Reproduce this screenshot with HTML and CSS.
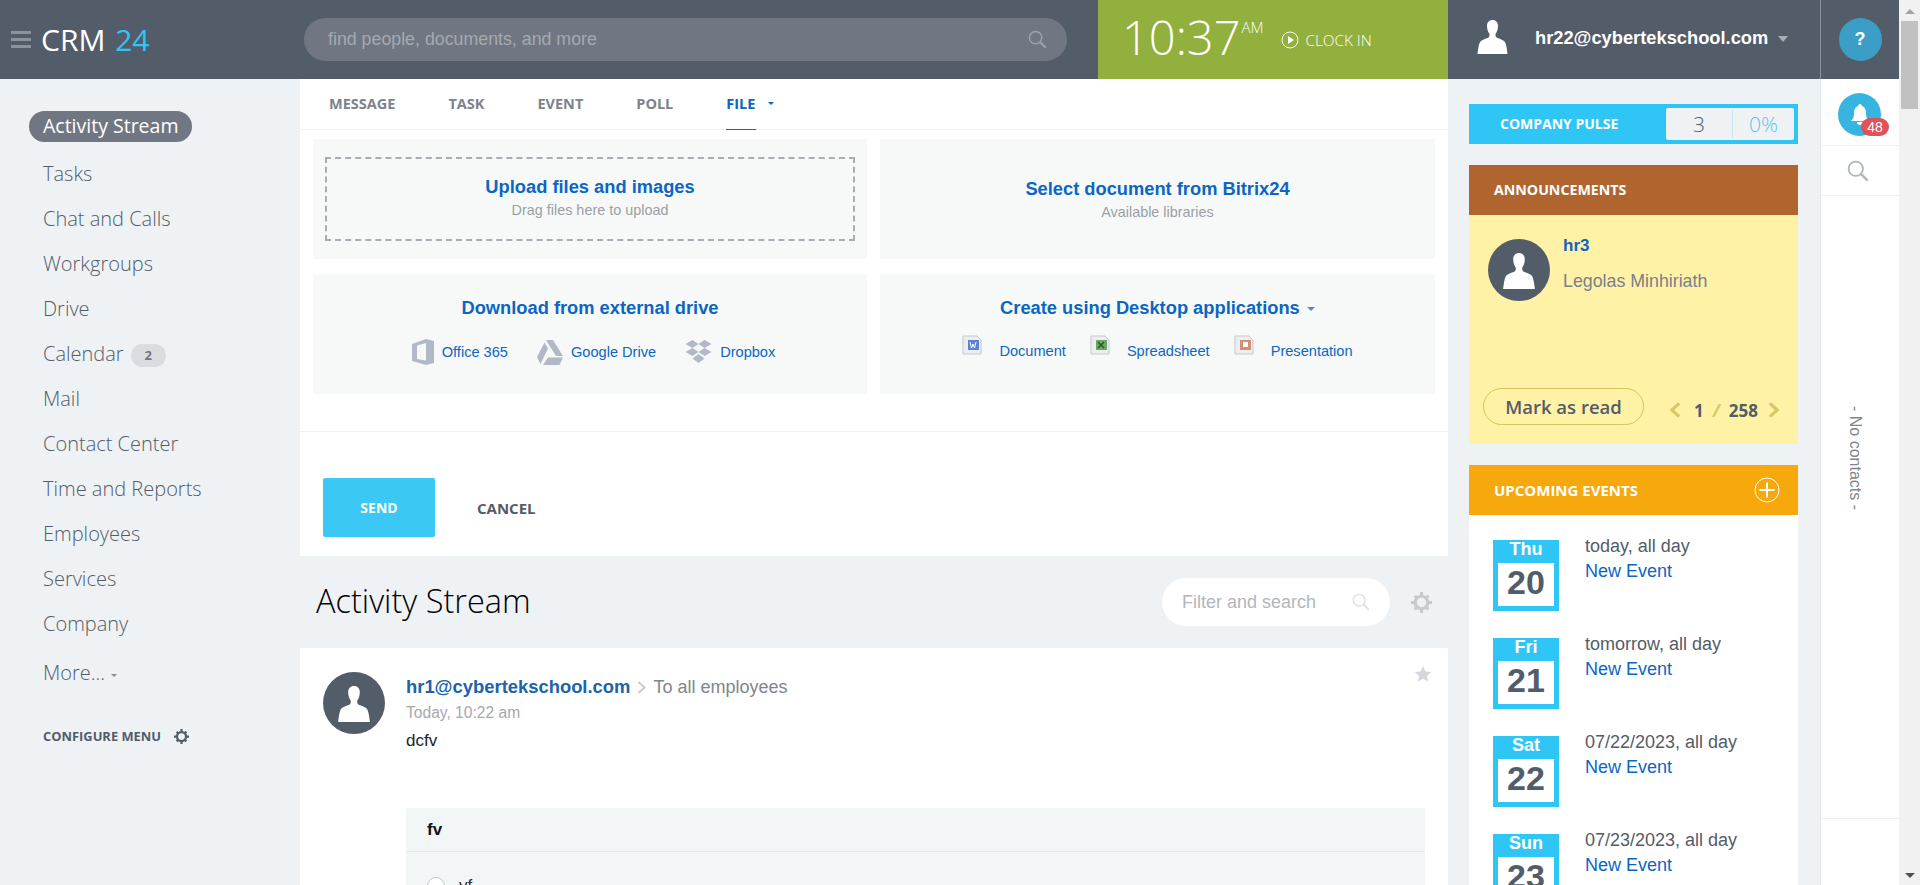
FILE: index.html
```html
<!DOCTYPE html>
<html lang="en">
<head>
    <meta charset="UTF-8">
    <title>CRM 24 - Activity Stream</title>
    <link rel="stylesheet" href="styles.css">
</head>
<body>
    <svg class="defs" width="0" height="0">
        <symbol id="person" viewBox="0 0 30 34">
            <path d="M15 0c-3.500 0-5.500 2.500-5.500 6 0 3 1 6 2.500 8 0 2 0 3-2 4-3 1-6 2-7.500 4C1 25 .5 30 0 34h30c-.5-4-1-9-2.500-12-1.500-2-4.500-3-7.500-4-2-1-2-2-2-4 1.500-2 2.500-5 2.500-8 0-3.500-2-6-5.500-6z"/>
        </symbol>
        <symbol id="magnifier" viewBox="0 0 20 20">
            <circle cx="8" cy="8" r="6.500" fill="none" stroke="currentColor" stroke-width="1.600"/>
            <path d="M12.800 12.800l6 6" stroke="currentColor" stroke-width="2.200" fill="none"/>
        </symbol>
        <symbol id="gear" viewBox="0 0 20 20">
            <circle cx="10" cy="10" r="6" fill="none" stroke="currentColor" stroke-width="3"/>
            <path d="M8.500 0h3v3h-3zM8.500 17h3v3h-3zM0 8.500h3v3H0zM17 8.500h3v3h-3zM2.500 4.600l2.100-2.100 2 2-2.100 2.100zM13.400 15.500l2.100-2.100 2 2-2.100 2.100zM2.500 15.400l2-2 2.100 2.100-2 2zM13.400 4.500l2.100-2.100 2.100 2.100-2.100 2.100z" fill="currentColor"/>
        </symbol>
    </svg>

    <div class="window">
        <div class="page">
            <header class="topbar">
                <div class="brand">
                    <span class="burger"><i></i><i></i><i></i></span>
                    <span class="logo">CRM <b>24</b></span>
                </div>
                <div class="search">
                    <span>find people, documents, and more</span>
                    <svg class="search-icon"><use href="#magnifier"/></svg>
                </div>
                <div class="clock">
                    <span class="time">10:37</span><span class="ampm">AM</span>
                    <svg class="play" viewBox="0 0 18 18"><circle cx="9" cy="9" r="8" fill="none" stroke="#fff" stroke-width="1"/><path d="M7 5l6 4-6 4z" fill="#fff"/></svg>
                    <span class="clock-in">CLOCK IN</span>
                </div>
                <div class="user">
                    <svg class="user-icon"><use href="#person"/></svg>
                    <span class="user-name">hr22@cybertekschool.com</span>
                    <span class="caret"></span>
                </div>
            </header>

            <div class="columns">
                <nav class="sidebar">
                    <a class="nav-item active"><span>Activity Stream</span></a>
                    <a class="nav-item">Tasks</a>
                    <a class="nav-item">Chat and Calls</a>
                    <a class="nav-item">Workgroups</a>
                    <a class="nav-item">Drive</a>
                    <a class="nav-item">Calendar <em class="count">2</em></a>
                    <a class="nav-item">Mail</a>
                    <a class="nav-item">Contact Center</a>
                    <a class="nav-item">Time and Reports</a>
                    <a class="nav-item">Employees</a>
                    <a class="nav-item">Services</a>
                    <a class="nav-item">Company</a>
                    <a class="nav-item more">More... <span class="more-caret"></span></a>
                    <div class="configure">
                        CONFIGURE MENU
                        <svg class="configure-gear"><use href="#gear"/></svg>
                    </div>
                </nav>

                <main class="main">
                    <section class="composer">
                        <div class="tabs">
                            <a class="tab">MESSAGE</a>
                            <a class="tab">TASK</a>
                            <a class="tab">EVENT</a>
                            <a class="tab">POLL</a>
                            <a class="tab active">FILE <span class="tab-caret"></span></a>
                        </div>
                        <div class="file-grid">
                            <div class="file-card">
                                <div class="dropzone">
                                    <a class="card-title">Upload files and images</a>
                                    <span class="card-sub">Drag files here to upload</span>
                                </div>
                            </div>
                            <div class="file-card">
                                <a class="card-title">Select document from Bitrix24</a>
                                <span class="card-sub">Available libraries</span>
                            </div>
                            <div class="file-card">
                                <a class="card-title">Download from external drive</a>
                                <div class="services">
                                    <a class="service">
                                        <svg width="22" height="26" viewBox="0 0 22 26"><path d="M14 0l8 2v22l-8 2-14-4V5zM14 4L5 6.500V20l9 1.500z" fill="#b1b9c7" fill-rule="evenodd"/></svg>
                                        Office 365
                                    </a>
                                    <a class="service">
                                        <svg width="26" height="25" viewBox="0 0 26 25"><path d="M9 0h7l10 16h-7zM7.500 2.500L11 8.500 3.500 24 0 17zM11 17.500h15L22.500 25H6z" fill="#b1b9c7"/></svg>
                                        Google Drive
                                    </a>
                                    <a class="service">
                                        <svg width="27" height="25" viewBox="0 0 27 25"><path d="M7.500 0l6 4-6 4-7-4zM19.500 0l7 4-7 4-6-4zM7.500 8l6 4-6 4-7-4zM19.500 8l7 4-7 4-6-4zM13.500 14l6 4.500-6 4.500-6-4.500z" fill="#b1b9c7"/></svg>
                                        Dropbox
                                    </a>
                                </div>
                            </div>
                            <div class="file-card">
                                <a class="card-title">Create using Desktop applications <span class="title-caret"></span></a>
                                <div class="services desktop">
                                    <a class="service">
                                        <svg width="20" height="20" viewBox="0 0 20 20"><path d="M1 1h14l4 4v14H1z" fill="#eceef2" stroke="#c3c7cd"/><rect x="6" y="5" width="11" height="10" fill="#5b82d6"/><path d="M8 7l1.500 6 1.500-4 1.500 4L14 7" fill="none" stroke="#fff"/></svg>
                                        Document
                                    </a>
                                    <a class="service">
                                        <svg width="20" height="20" viewBox="0 0 20 20"><path d="M1 1h14l4 4v14H1z" fill="#eceef2" stroke="#c3c7cd"/><rect x="6" y="5" width="11" height="10" fill="#6ea763"/><path d="M8 7l6 6M14 7l-6 6" stroke="#1f5e26" stroke-width="1.500"/></svg>
                                        Spreadsheet
                                    </a>
                                    <a class="service">
                                        <svg width="20" height="20" viewBox="0 0 20 20"><path d="M1 1h14l4 4v14H1z" fill="#eceef2" stroke="#c3c7cd"/><rect x="6" y="5" width="11" height="10" fill="#d78f72"/><rect x="9" y="7" width="5" height="5" fill="#fff"/></svg>
                                        Presentation
                                    </a>
                                </div>
                            </div>
                        </div>
                        <div class="composer-actions">
                            <button class="send">SEND</button>
                            <button class="cancel">CANCEL</button>
                        </div>
                    </section>

                    <div class="stream-head">
                        <h1>Activity Stream</h1>
                        <div class="filter">
                            <span>Filter and search</span>
                            <svg class="filter-icon"><use href="#magnifier"/></svg>
                        </div>
                        <svg class="stream-gear"><use href="#gear"/></svg>
                    </div>

                    <article class="post">
                        <svg class="star" viewBox="0 0 20 20"><path d="M10 1l2.700 6.200 6.600.6-5 4.400 1.500 6.500L10 15.300l-5.800 3.400 1.500-6.500-5-4.400 6.600-.6z"/></svg>
                        <div class="avatar post-avatar"><svg><use href="#person"/></svg></div>
                        <div class="post-body">
                            <div class="post-author">
                                <a>hr1@cybertekschool.com</a>
                                <svg class="post-arrow" viewBox="0 0 9 13"><path d="M1.500 1l6 5.500-6 5.500" fill="none" stroke="#c9ccd0" stroke-width="2"/></svg>
                                <span>To all employees</span>
                            </div>
                            <div class="post-date">Today, 10:22 am</div>
                            <div class="post-text">dcfv</div>
                            <div class="poll">
                                <div class="poll-title">fv</div>
                                <div class="poll-row"><span class="radio"></span>vf</div>
                            </div>
                        </div>
                    </article>
                </main>

                <aside class="widgets">
                    <div class="pulse">
                        <span class="pulse-label">COMPANY PULSE</span>
                        <div class="pulse-values">
                            <span class="pulse-count">3</span>
                            <span class="pulse-pct">0%</span>
                        </div>
                    </div>

                    <div class="announce">
                        <div class="widget-head brown">ANNOUNCEMENTS</div>
                        <div class="announce-body">
                            <div class="announce-top">
                                <div class="avatar"><svg><use href="#person"/></svg></div>
                                <div>
                                    <a class="announce-title">hr3</a>
                                    <div class="announce-name">Legolas Minhiriath</div>
                                </div>
                            </div>
                            <div class="announce-foot">
                                <button class="mark-read">Mark as read</button>
                                <div class="pager">
                                    <svg viewBox="0 0 9 13"><path d="M7.500 1l-6 5.500 6 5.500" fill="none" stroke="#d9c766" stroke-width="2.500"/></svg>
                                    <b>1</b><i>/</i><b>258</b>
                                    <svg viewBox="0 0 9 13"><path d="M1.500 1l6 5.500-6 5.500" fill="none" stroke="#d9c766" stroke-width="2.500"/></svg>
                                </div>
                            </div>
                        </div>
                    </div>

                    <div class="events">
                        <div class="widget-head orange">
                            UPCOMING EVENTS
                            <svg class="plus" viewBox="0 0 26 26"><circle cx="13" cy="13" r="12" fill="none" stroke="#fff" stroke-width="1"/><path d="M5.500 13h15M13 5.500v15" stroke="#fff" stroke-width="2"/></svg>
                        </div>
                        <div class="event">
                            <div class="date"><span>Thu</span><b>20</b></div>
                            <div class="event-info"><div>today, all day</div><a>New Event</a></div>
                        </div>
                        <div class="event">
                            <div class="date"><span>Fri</span><b>21</b></div>
                            <div class="event-info"><div>tomorrow, all day</div><a>New Event</a></div>
                        </div>
                        <div class="event">
                            <div class="date"><span>Sat</span><b>22</b></div>
                            <div class="event-info"><div>07/22/2023, all day</div><a>New Event</a></div>
                        </div>
                        <div class="event">
                            <div class="date"><span>Sun</span><b>23</b></div>
                            <div class="event-info"><div>07/23/2023, all day</div><a>New Event</a></div>
                        </div>
                    </div>
                </aside>
            </div>
        </div>

        <div class="rail">
            <div class="rail-top"><span class="help">?</span></div>
            <div class="rail-bell">
                <span class="bell-circle">
                    <svg viewBox="0 0 20 22"><path d="M10 0c1 0 2 1 2 2 3 1 4 4 4 7 0 4 1 6 3 8H1c2-2 3-4 3-8 0-3 1-6 4-7 0-1 1-2 2-2zM7 18h6c0 2-1 3-3 3s-3-1-3-3z" fill="#fff"/></svg>
                </span>
                <span class="bell-badge">48</span>
            </div>
            <div class="rail-search"><svg><use href="#magnifier"/></svg></div>
            <div class="rail-contacts"><span>- No contacts -</span></div>
            <div class="rail-bottom"></div>
        </div>

        <div class="scrollbar">
            <span class="arrow-up"></span>
            <div class="thumb"></div>
            <span class="arrow-down"></span>
        </div>
    </div>
</body>
</html>
```

FILE: styles.css
```css
* {
    margin: 0;
    padding: 0;
    box-sizing: border-box;
}

html, body {
    height: 100%;
    overflow: hidden;
}

body {
    font-family: "Liberation Sans", Arial, sans-serif;
    background: #eef2f4;
    color: #535c69;
}

.defs {
    position: absolute;
}

a {
    color: #0b66c3;
    text-decoration: none;
}

button {
    border: none;
    background: none;
    cursor: pointer;
}

.window {
    display: flex;
    height: 885px;
    overflow: hidden;
}

.page {
    width: 1820px;
    flex: none;
    display: flex;
    flex-direction: column;
}

/* top bar */
.topbar {
    height: 79px;
    flex: none;
    display: flex;
    background: #535c69;
    color: #fff;
}

.brand {
    width: 304px;
    display: flex;
    align-items: center;
    padding: 0 0 0 11px;
    gap: 10px;
}

.burger {
    display: flex;
    flex-direction: column;
    gap: 4px;
    width: 20px;
}

.burger i {
    height: 3px;
    background: #8d939c;
}

.logo {
    font-family: "Open Sans", sans-serif;
    font-size: 30px;
    line-height: 1;
}

.logo b {
    font-weight: 400;
    color: #2fc6f6;
    margin-left: 2px;
}

.search {
    width: 763px;
    height: 43px;
    margin-top: 18px;
    border-radius: 22px;
    background: #717782;
    display: flex;
    align-items: center;
    justify-content: space-between;
    padding: 0 20px 0 24px;
    font-size: 17.800px;
    color: #a5a9b0;
}

.search-icon {
    width: 19px;
    height: 19px;
    color: #9da2a9;
}

.clock {
    width: 350px;
    margin-left: 31px;
    background: #91b03d;
    display: flex;
    align-items: center;
    padding-left: 24px;
    font-family: "Open Sans", sans-serif;
    font-weight: 300;
}

.time {
    font-size: 47px;
    line-height: 1;
    margin-top: -4px;
}

.ampm {
    font-size: 15px;
    align-self: flex-start;
    margin-top: 17px;
    margin-left: 1px;
}

.play {
    width: 18px;
    height: 18px;
    margin: 0 6px 0 18px;
}

.clock-in {
    font-size: 15.300px;
}

.user {
    flex: 1;
    display: flex;
    align-items: center;
    padding-left: 29px;
}

.user-icon {
    width: 31px;
    height: 34px;
    fill: #fff;
    margin-top: -5px;
}

.user-name {
    font-size: 18.300px;
    font-weight: 700;
    margin-left: 27px;
    margin-top: -3px;
}

.caret {
    margin-left: 10px;
    border: 5px solid transparent;
    border-top: 6px solid #a8adb4;
    border-bottom: 0;
    margin-top: -2px;
}

/* columns under the bar */
.columns {
    flex: 1;
    display: flex;
    min-height: 0;
}

.sidebar {
    width: 300px;
    flex: none;
    padding-top: 28px;
    font-family: "Open Sans", sans-serif;
    font-weight: 300;
}

.nav-item {
    display: block;
    height: 45px;
    line-height: 45px;
    padding-left: 43px;
    font-size: 20px;
    color: #535c69;
}

.nav-item.active {
    height: 44px;
    line-height: 38px;
    padding-left: 29px;
    font-size: 19.500px;
}

.nav-item.active span {
    display: inline-block;
    height: 31px;
    line-height: 30px;
    padding: 0 14px;
    border-radius: 16px;
    background: #717782;
    color: #fff;
    font-weight: 400;
}

.count {
    display: inline-block;
    width: 35px;
    height: 23px;
    line-height: 23px;
    margin-left: 2px;
    border-radius: 12px;
    background: #d9dde1;
    color: #717782;
    font-size: 13px;
    font-weight: 700;
    font-style: normal;
    text-align: center;
    vertical-align: 1px;
}

.nav-item.more {
    margin-top: 4px;
}

.more-caret {
    display: inline-block;
    vertical-align: 3px;
    margin-left: 1px;
    border: 3px solid transparent;
    border-top: 3px solid #8a9099;
    border-bottom: 0;
}

.configure {
    display: flex;
    align-items: center;
    gap: 13px;
    margin-top: 32px;
    padding-left: 43px;
    font-size: 12.900px;
    font-weight: 700;
    color: #535c69;
}

.configure-gear {
    width: 15px;
    height: 15px;
    color: #535c69;
}

/* composer */
.main {
    width: 1148px;
    flex: none;
    display: flex;
    flex-direction: column;
    min-height: 0;
}

.composer {
    height: 477px;
    flex: none;
    background: #fff;
    display: flex;
    flex-direction: column;
}

.tabs {
    height: 51px;
    flex: none;
    display: flex;
    border-bottom: 1px solid #eef0f2;
    padding-left: 29px;
    font-family: "Open Sans", sans-serif;
    font-size: 14.500px;
    font-weight: 700;
}

.tab {
    height: 51px;
    line-height: 49px;
    color: #7d838c;
    margin-right: 53px;
}

.tab.active {
    color: #0b66c3;
    border-bottom: 1px solid #0b66c3;
    width: 30px;
    white-space: nowrap;
}

.tab-caret {
    display: inline-block;
    vertical-align: 4px;
    margin-left: 9px;
    border: 3px solid transparent;
    border-top: 3px solid #0b66c3;
    border-bottom: 0;
}

.file-grid {
    display: grid;
    grid-template-columns: 554px 555px;
    grid-auto-rows: 120px;
    gap: 15px 13px;
    padding: 9px 13px 0;
}

.file-card {
    background: #f7f9f9;
    display: flex;
    flex-direction: column;
    align-items: center;
    justify-content: center;
    text-align: center;
    padding-top: 1px;
}

.file-card:nth-child(n+3) {
    justify-content: flex-start;
    padding: 23px 0 0;
}

.file-card:first-child {
    padding: 18px 12px;
}

.dropzone {
    width: 100%;
    height: 100%;
    border: 2px dashed #a8adb4;
    display: flex;
    flex-direction: column;
    align-items: center;
    justify-content: center;
    padding-bottom: 2px;
}

.card-title {
    font-size: 18.300px;
    line-height: 22px;
    font-weight: 700;
}

.card-sub {
    font-size: 14.400px;
    line-height: 20px;
    color: #9b9fa4;
    margin-top: 2px;
}

.title-caret {
    display: inline-block;
    vertical-align: 3px;
    margin-left: 2px;
    border: 4px solid transparent;
    border-top: 4px solid #5b87c4;
    border-bottom: 0;
}

.services {
    display: flex;
    align-items: center;
    gap: 29px;
    margin-top: 20px;
    padding-left: 7px;
}

.service {
    display: flex;
    align-items: center;
    gap: 8px;
    font-size: 14.600px;
}

.desktop {
    gap: 24px;
    margin-top: 24px;
    padding-left: 0;
}

.desktop .service {
    gap: 17px;
}

.desktop svg {
    margin-top: -13px;
}

.composer-actions {
    display: flex;
    align-items: center;
    margin-top: 37px;
    padding: 46px 0 0 23px;
    border-top: 1px solid #eef0f2;
}

.send {
    width: 112px;
    height: 59px;
    background: #3bc8f5;
    border-radius: 2px;
    color: #fff;
    font-family: "Open Sans", sans-serif;
    font-size: 14px;
    font-weight: 700;
}

.cancel {
    margin-left: 42px;
    color: #535c69;
    font-family: "Open Sans", sans-serif;
    font-size: 15px;
    font-weight: 700;
}

/* stream */
.stream-head {
    height: 92px;
    flex: none;
    display: flex;
    align-items: center;
    padding: 0 16px;
}

.stream-head h1 {
    flex: 1;
    font-family: "Open Sans", sans-serif;
    font-size: 32.500px;
    font-weight: 300;
    color: #000;
    margin-top: -3px;
}

.filter {
    width: 228px;
    height: 48px;
    border-radius: 24px;
    background: #fff;
    display: flex;
    align-items: center;
    justify-content: space-between;
    padding: 0 20px;
    font-size: 18px;
    color: #b3b6bb;
}

.filter-icon {
    width: 18px;
    height: 18px;
    color: #dfe1e4;
}

.stream-gear {
    width: 21px;
    height: 21px;
    color: #c7cbd0;
    margin-left: 21px;
}

.post {
    position: relative;
    flex: 1;
    background: #fff;
    display: flex;
    padding: 24px 23px 0;
    overflow: hidden;
}

.star {
    position: absolute;
    top: 17px;
    right: 16px;
    width: 18px;
    height: 18px;
    fill: #d5d7dc;
}

.avatar {
    width: 62px;
    height: 62px;
    flex: none;
    border-radius: 50%;
    background: #535c69;
    display: flex;
    align-items: center;
    justify-content: center;
}

.avatar svg {
    width: 32px;
    height: 36px;
    fill: #fff;
    margin-top: 2px;
}

.post-body {
    flex: 1;
    margin-left: 21px;
}

.post-author {
    display: flex;
    align-items: center;
    font-size: 18px;
    line-height: 30px;
    color: #80868e;
}

.post-author a {
    font-weight: 700;
    font-size: 18.400px;
    color: #1b63ab;
}

.post-arrow {
    width: 9px;
    height: 13px;
    margin: 0 7px;
}

.post-date {
    font-size: 15.600px;
    line-height: 22px;
    color: #a5a9ae;
}

.post-text {
    font-size: 17px;
    line-height: 34px;
    color: #222;
}

.poll {
    margin-top: 50px;
    background: #f3f6f7;
    height: 100px;
}

.poll-title {
    height: 44px;
    line-height: 44px;
    padding-left: 21px;
    font-size: 17px;
    font-weight: 700;
    color: #111;
    border-bottom: 1px solid #e6e9eb;
}

.poll-row {
    display: flex;
    align-items: center;
    gap: 14px;
    padding: 24px 0 0 21px;
    font-size: 17px;
    color: #333;
}

.radio {
    width: 18px;
    height: 18px;
    border: 1px solid #c2c6ca;
    border-radius: 50%;
    background: #fff;
}

/* right widgets */
.widgets {
    width: 372px;
    flex: none;
    padding: 25px 22px 0 21px;
    overflow: hidden;
}

.pulse {
    height: 40px;
    background: #2fc6f6;
    display: flex;
    align-items: center;
    justify-content: space-between;
    padding: 0 4px 0 31px;
}

.pulse-label {
    font-family: "Open Sans", sans-serif;
    font-size: 14px;
    font-weight: 700;
    color: #fff;
    margin-top: -2px;
}

.pulse-values {
    width: 128px;
    height: 32px;
    background: #eef2f4;
    border-radius: 2px;
    display: flex;
    align-items: center;
    font-family: "Open Sans", sans-serif;
    font-weight: 300;
    font-size: 21px;
}

.pulse-count {
    width: 67px;
    text-align: center;
    color: #535c69;
    border-right: 1px solid #c5e5f1;
}

.pulse-pct {
    flex: 1;
    text-align: center;
    color: #55c7f0;
}

.widget-head {
    height: 50px;
    display: flex;
    align-items: center;
    justify-content: space-between;
    padding: 0 18px 0 25px;
    font-family: "Open Sans", sans-serif;
    font-size: 14.200px;
    font-weight: 700;
    color: #fff;
}

.brown {
    background: #b0652f;
    padding-bottom: 2px;
}

.orange {
    background: #f7a80c;
    font-size: 15px;
}

.announce {
    margin-top: 21px;
}

.announce-body {
    height: 229px;
    background: #fff2a6;
    padding: 24px 19px 0 14px;
    display: flex;
    flex-direction: column;
}

.announce-top {
    display: flex;
    gap: 13px;
    padding-left: 5px;
    flex: 1;
}

.announce-title {
    display: block;
    font-size: 17px;
    font-weight: 700;
    line-height: 20px;
    margin-top: -3px;
}

.announce-name {
    font-size: 17.800px;
    margin-top: 15px;
    color: #7a808a;
}

.announce-foot {
    display: flex;
    align-items: center;
    justify-content: space-between;
    margin-bottom: 19px;
}

.mark-read {
    width: 161px;
    height: 37px;
    border: 1px solid #d4c35e;
    border-radius: 19px;
    font-family: "Open Sans", sans-serif;
    font-size: 18.500px;
    font-weight: 600;
    color: #535c69;
}

.pager {
    display: flex;
    align-items: center;
    gap: 9px;
    margin-top: 7px;
    font-family: "Open Sans", sans-serif;
    font-size: 17px;
}

.pager svg {
    width: 11px;
    height: 16px;
}

.pager b {
    font-weight: 700;
}

.pager b:first-of-type {
    margin-left: 4px;
}

.pager b:last-of-type {
    margin-right: 1px;
}

.pager i {
    color: #d9c766;
    font-weight: 700;
}

.events {
    margin-top: 21px;
    background: #fff;
    height: 440px;
}

.plus {
    width: 26px;
    height: 26px;
}

.event {
    display: flex;
    height: 98px;
    padding: 25px 0 0 24px;
}

.date {
    width: 66px;
    height: 71px;
    flex: none;
    background: #2fc6f6;
    padding: 0 5px 5px;
    display: flex;
    flex-direction: column;
}

.date span {
    height: 23px;
    line-height: 19px;
    text-align: center;
    font-size: 18px;
    font-weight: 700;
    color: #fff;
}

.date b {
    flex: 1;
    background: #fff;
    text-align: center;
    font-size: 34px;
    line-height: 39px;
    color: #535c69;
}

.event-info {
    margin-left: 26px;
    margin-top: -6px;
    font-size: 18px;
    line-height: 24px;
    color: #535c69;
}

.event-info a {
    display: block;
    margin-top: 1px;
}

/* right rail */
.rail {
    width: 79px;
    flex: none;
    background: #fff;
    border-left: 1px solid #e5e8ec;
    display: flex;
    flex-direction: column;
}

.rail-top {
    height: 79px;
    background: #535c69;
    border-left: 1px solid #8d939c;
    margin-left: -1px;
    display: flex;
    align-items: center;
    justify-content: center;
}

.help {
    width: 43px;
    height: 43px;
    border-radius: 50%;
    background: #3a9ec6;
    color: #fff;
    font-weight: 700;
    font-size: 18px;
    line-height: 43px;
    text-align: center;
}

.rail-bell {
    position: relative;
    height: 67px;
    border-bottom: 1px solid #eef0f2;
    padding: 14px 0 0 17px;
}

.bell-circle {
    display: flex;
    align-items: center;
    justify-content: center;
    width: 43px;
    height: 43px;
    border-radius: 50%;
    background: #35b5e0;
}

.bell-circle svg {
    width: 20px;
    height: 22px;
}

.bell-badge {
    position: absolute;
    left: 40px;
    top: 39px;
    width: 28px;
    height: 18px;
    border-radius: 9px;
    background: #e0525a;
    color: #fff;
    font-size: 14px;
    line-height: 18px;
    text-align: center;
}

.rail-search {
    height: 50px;
    border-bottom: 1px solid #eef0f2;
    display: flex;
    align-items: center;
    justify-content: center;
}

.rail-search svg {
    width: 22px;
    height: 22px;
    color: #b0b6bd;
    margin-right: 4px;
}

.rail-contacts {
    height: 623px;
    border-bottom: 1px solid #eef0f2;
    display: flex;
    align-items: center;
    justify-content: center;
    padding-bottom: 98px;
}

.rail-contacts span {
    writing-mode: vertical-rl;
    font-size: 16px;
    color: #80868e;
    margin-right: 11px;
}

.rail-bottom {
    flex: 1;
}

/* scrollbar drawn as a strip */
.scrollbar {
    width: 21px;
    flex: none;
    background: #f1f1f1;
    display: flex;
    flex-direction: column;
    align-items: center;
}

.arrow-up {
    margin-top: 9px;
    border: 5px solid transparent;
    border-bottom: 5px solid #a3a3a3;
    border-top: 0;
}

.thumb {
    width: 17px;
    height: 88px;
    margin-top: 7px;
    background: #c1c1c1;
}

.arrow-down {
    margin-top: auto;
    margin-bottom: 7px;
    border: 5px solid transparent;
    border-top: 5px solid #505050;
    border-bottom: 0;
}
```
